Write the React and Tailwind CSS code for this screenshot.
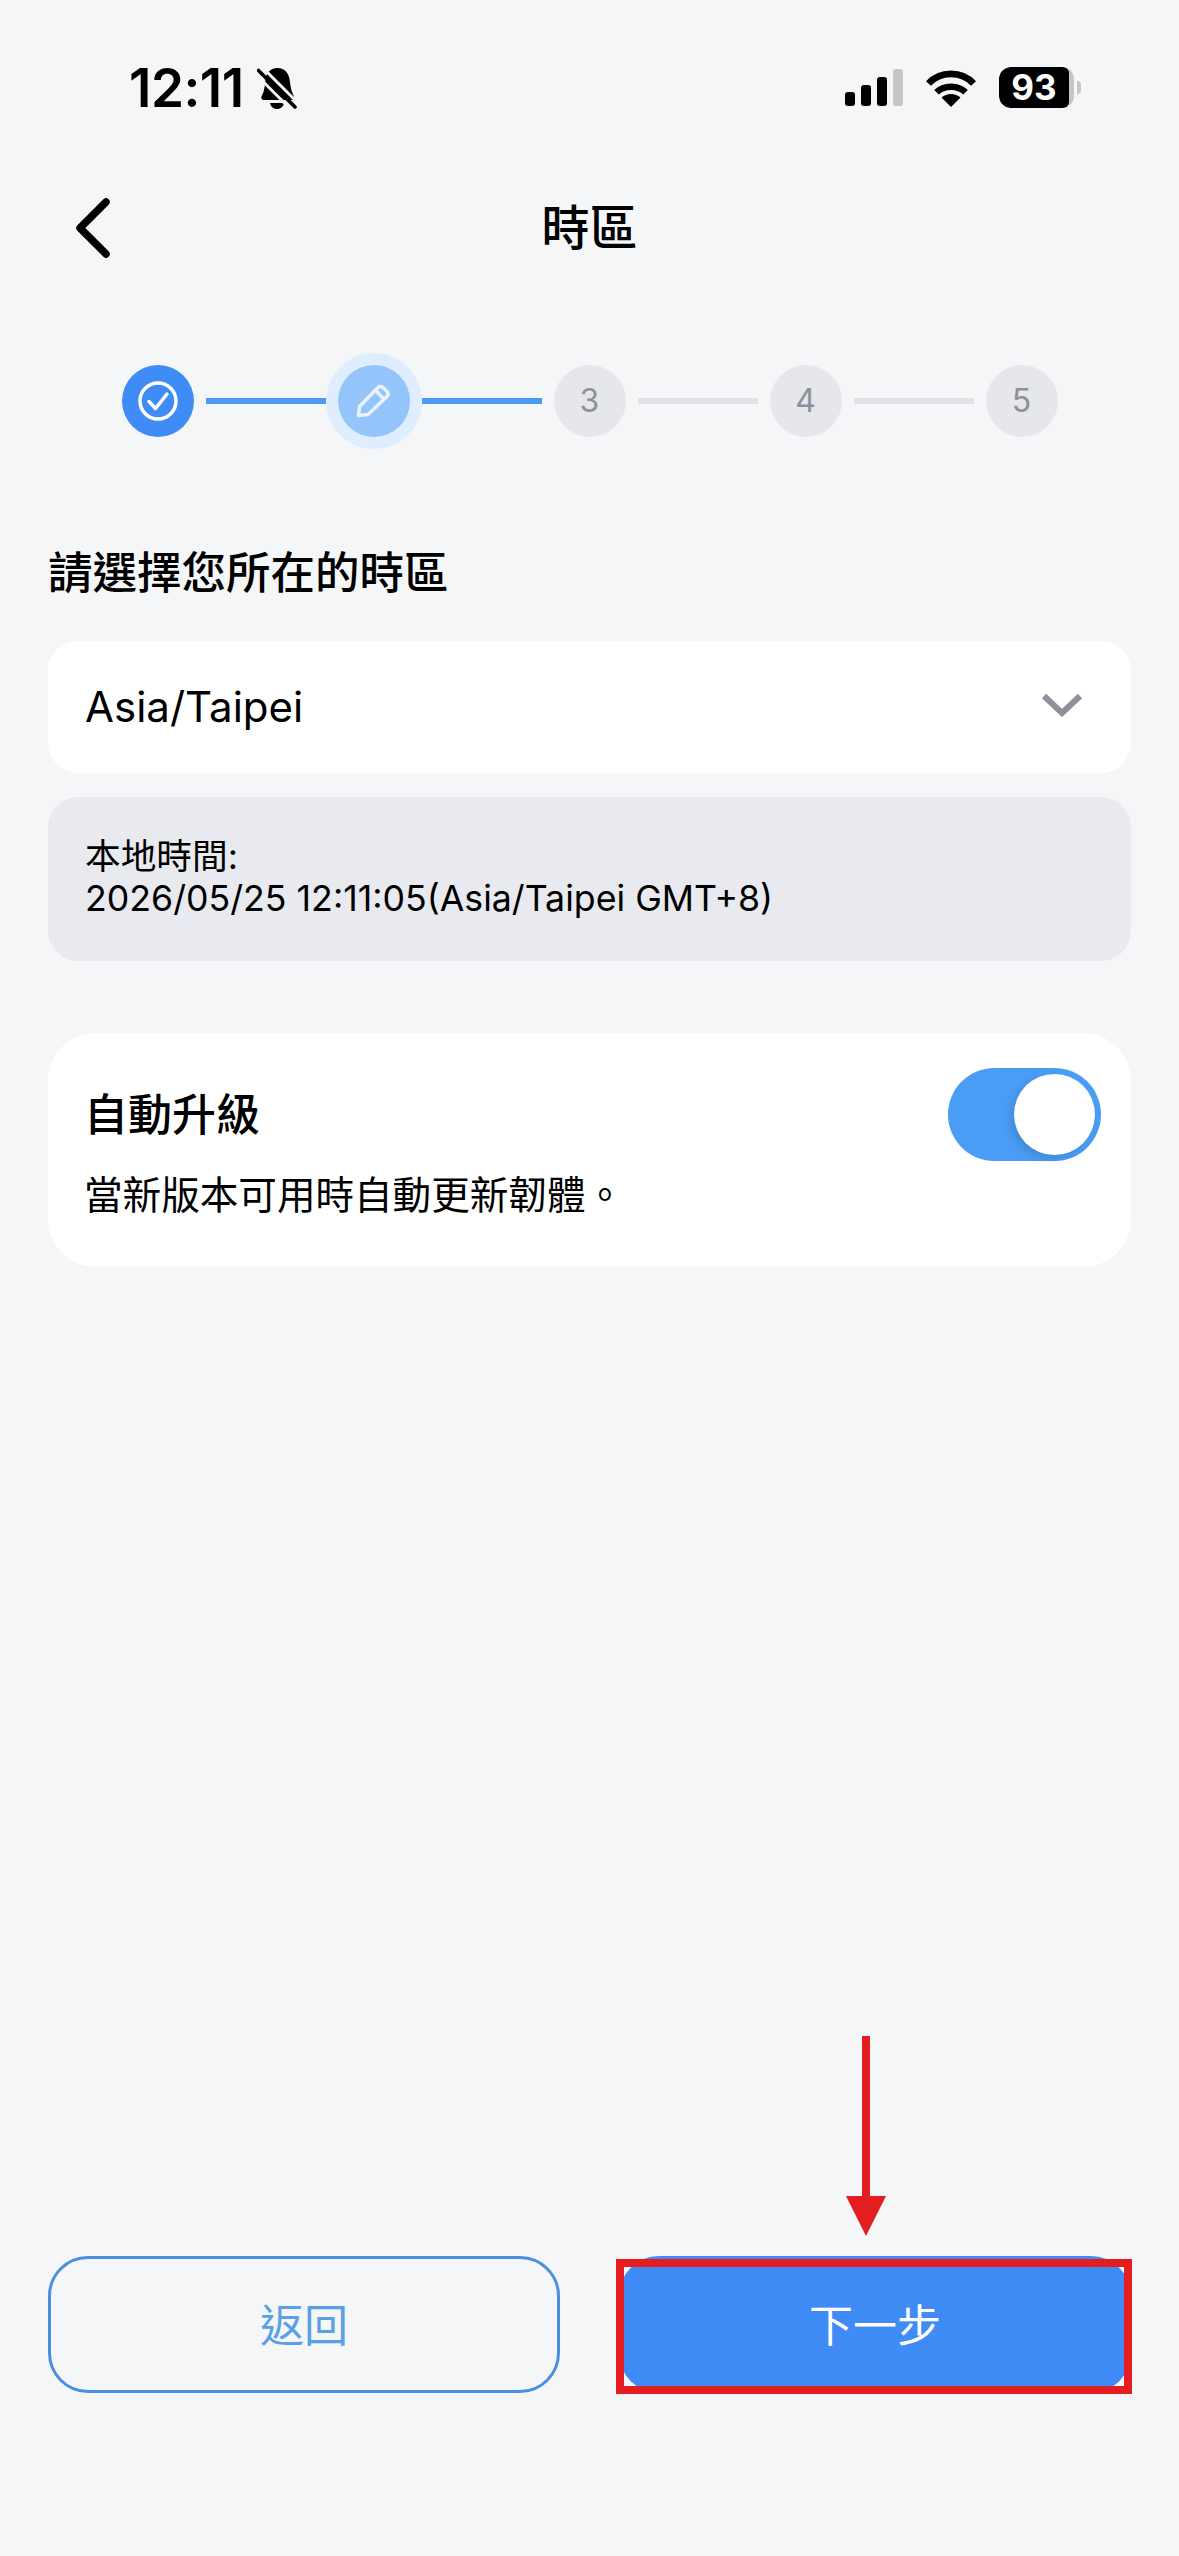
import React from "react";

const SANS = "font-['Inter','Noto_Sans_CJK_TC',sans-serif]";

function Bell() {
  return (
    <svg width="40" height="43" viewBox="0 0 40 43" className="ml-[13px]">
      <path d="M20.500 1c6.500 0 11 4.500 12 11 .8 6 1.500 12 4 16.500 1.200 2.500.5 4.500-2 4.500H7c-2.600 0-3.400-2.500-2-4.500C7.500 24 8 18 8.500 12c1-6.500 5.500-11 12-11z" fill="#000" />
      <path d="M13 36h14c-.5 3.500-3.400 6-7 6s-6.500-2.500-7-6z" fill="#000" />
      <path d="M-2 6.500 L34.500 43" stroke="#f5f6f8" strokeWidth="3" />
      <path d="M5 0 L42 37" stroke="#f5f6f8" strokeWidth="3" />
      <path d="M1.500 3.500 L38 40" stroke="#000" strokeWidth="3.600" strokeLinecap="round" />
    </svg>
  );
}

function Wifi() {
  return (
    <svg width="52" height="38" viewBox="0 0 52 38">
      <path d="M26 38 L16.500 28.500 C21.500 23.800 30.500 23.800 35.500 28.500 Z" fill="#000" />
      <path d="M11.500 23.300 C18.800 15.800 33.200 15.800 40.500 23.300" fill="none" stroke="#000" strokeWidth="6.500" />
      <path d="M3.500 14.500 C15.500 1.700 36.500 1.700 48.500 14.500" fill="none" stroke="#000" strokeWidth="6.800" />
    </svg>
  );
}

function Signal() {
  return (
    <div className="flex items-end gap-[6px] h-[37px]">
      <div className="w-[10px] h-[14px] rounded-[3px] bg-black" />
      <div className="w-[10px] h-[21px] rounded-[3px] bg-black" />
      <div className="w-[10px] h-[29px] rounded-[3px] bg-black" />
      <div className="w-[10px] h-[37px] rounded-[3px] bg-[#c6c6c6]" />
    </div>
  );
}

function Battery() {
  return (
    <div className="flex items-center">
      <div className="w-[75px] h-[41px] rounded-[12px] bg-[#c6c6c6] overflow-hidden">
        <div className="w-[70px] h-[41px] rounded-l-[12px] rounded-r-[6px] bg-black flex items-center justify-center text-white font-['Inter',sans-serif] font-bold text-[35px] leading-none">
          93
        </div>
      </div>
      <div className="ml-[3px] w-[4px] h-[13px] rounded-r-[4px] bg-[#c6c6c6]" />
    </div>
  );
}

function StepNumber({ n }) {
  return (
    <div className="w-[72px] h-[72px] rounded-full bg-[#e5e7eb] flex items-center justify-center text-[#8e919c] text-[32px] leading-none">
      {n}
    </div>
  );
}

function Line({ done }) {
  return <div className={done ? "w-[120px] h-[6px] bg-[#4a9cf3]" : "w-[120px] h-[6px] bg-[#e0e1e4]"} />;
}

export default function App() {
  return (
    <div className={`${SANS} relative w-[1179px] h-[2556px] bg-[#f5f6f8] text-black flex flex-col overflow-hidden`}>
      {/* Status bar */}
      <div className="h-[180px] pt-[67px] pl-[129px] pr-[98px] flex justify-between items-start">
        <div className="flex items-center h-[42px]">
          <span className="font-['Inter',sans-serif] font-semibold text-[53px] leading-none tracking-[-0.500px]">12:11</span>
          <Bell />
        </div>
        <div className="flex items-center h-[41px]">
          <Signal />
          <div className="ml-[22px]"><Wifi /></div>
          <div className="ml-[22px]"><Battery /></div>
        </div>
      </div>

      {/* Header */}
      <div className="h-[96px] grid grid-cols-[1fr_auto_1fr] items-center">
        <div className="pl-[75px]">
          <svg width="36" height="60" viewBox="0 0 36 60">
            <path d="M31 4 L5 30 L31 56" fill="none" stroke="#000" strokeWidth="7.500" strokeLinecap="round" strokeLinejoin="round" />
          </svg>
        </div>
        <div className="text-[48px] leading-[60px] font-medium">時區</div>
        <div />
      </div>

      {/* Stepper */}
      <div className="mt-[77px] h-[96px] flex items-center justify-center gap-3">
        <div className="w-[72px] h-[72px] rounded-full bg-[#3f8cf7] flex items-center justify-center">
          <svg width="42" height="42" viewBox="0 0 42 42" fill="none">
            <circle cx="21" cy="21" r="18" stroke="#fff" strokeWidth="3.500" />
            <path d="M12 21.500 L18.500 28.500 L30 14" stroke="#fff" strokeWidth="3.500" strokeLinecap="round" strokeLinejoin="round" />
          </svg>
        </div>
        <Line done />
        <div className="w-[72px] h-[72px] rounded-full bg-[#93c5fb] shadow-[0_0_0_12px_#dfeefe] flex items-center justify-center">
          <svg width="36" height="36" viewBox="0 0 36 36" fill="none" stroke="#e9f3fe" strokeWidth="3.500" strokeLinejoin="round">
            <path d="M2.500 32.500 L3.500 23.500 L22 4.500 Q24.500 2.500 27 4.500 L31 8.500 Q33 11 31 13.500 L12 31.500 Z" />
            <path d="M19.500 7.500 L27.500 15.500" />
          </svg>
        </div>
        <Line done />
        <StepNumber n="3" />
        <Line />
        <StepNumber n="4" />
        <Line />
        <StepNumber n="5" />
      </div>

      {/* Body */}
      <div className="px-[48px] flex flex-col flex-1">
        <div className="mt-[94px] text-[44.500px] leading-[60px] font-medium">請選擇您所在的時區</div>

        <div className="mt-[38px] h-[132px] rounded-[30px] bg-white pl-[37px] pr-[48px] flex items-center justify-between">
          <span className="text-[42px] leading-[60px]">Asia/Taipei</span>
          <svg width="42" height="24" viewBox="0 0 42 24" className="mb-[4px]">
            <path d="M3 3 L21 20 L39 3" fill="none" stroke="#8e919c" strokeWidth="6" />
          </svg>
        </div>

        <div className="mt-[24px] h-[164px] rounded-[30px] bg-[#e9eaef] pl-[37px] pb-[4px] flex flex-col justify-center text-[35.700px] leading-[42px]">
          <div>本地時間:</div>
          <div>2026/05/25 12:11:05(Asia/Taipei GMT+8)</div>
        </div>

        <div className="mt-[72px] h-[234px] rounded-[48px] bg-white pl-[37px] pr-[30px] flex items-start justify-between">
          <div className="pt-[52px]">
            <div className="text-[44px] leading-[60px] font-medium -ml-px">自動升級</div>
            <div className="mt-[25px] text-[38.600px] leading-[50px] -ml-px">當新版本可用時自動更新韌體。</div>
          </div>
          <div className="mt-[35px] w-[153px] h-[93px] rounded-full bg-[#4a9df5] flex items-center justify-end pr-[6px]">
            <div className="w-[81px] h-[81px] rounded-full bg-white shadow-[-4px_4px_10px_rgba(0,0,0,0.12)]" />
          </div>
        </div>

        {/* Buttons */}
        <div className="mt-auto mb-[163px] flex justify-between">
          <div className="w-[512px] h-[137px] rounded-[40px] border-[3px] border-[#4a90e0] flex items-center justify-center pt-[2px] text-[#5aa0e6] text-[44px]">
            返回
          </div>
          <div className="w-[512px] h-[137px] rounded-[40px] bg-[#3f8cf7] flex items-center justify-center pt-[2px] text-white text-[44px]">
            下一步
          </div>
        </div>
      </div>

      {/* Annotation overlay */}
      <div className="absolute left-[616px] top-[2259px] w-[516px] h-[135px] border-[8px] border-[#e41e20]" />
      <svg className="absolute left-[846px] top-[2036px]" width="40" height="200" viewBox="0 0 40 200">
        <path d="M16 0 H24 V160 H40 L20 200 L0 160 H16 Z" fill="#e41e20" />
      </svg>
    </div>
  );
}
